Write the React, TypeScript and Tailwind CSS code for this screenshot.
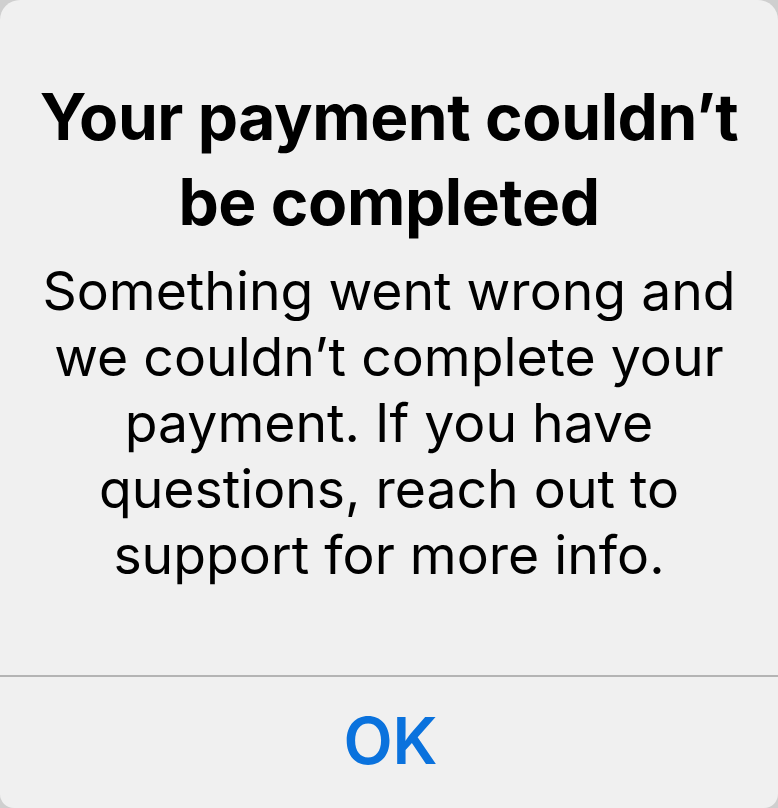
import React from 'react';

const App: React.FC = () => {
  return (
    <div className="w-[778px] h-[808px] bg-[#cfcfcf] overflow-hidden" style={{ fontFamily: 'Inter, "Noto Sans", sans-serif' }}>
      <div className="w-full h-full bg-[#f0f0f0] rounded-t-[20px] rounded-b-[14px] flex flex-col">
        <div className="flex flex-col items-center text-center text-black pt-[74px] px-6">
          <h1 className="text-[64px] leading-[85px] font-bold tracking-[-0.4px]">
            Your payment couldn’t
            <br />
            be completed
          </h1>
          <p className="mt-[14px] text-[53.5px] leading-[66px] font-normal">
            Something went wrong and
            <br />
            we couldn’t complete your
            <br />
            payment. If you have
            <br />
            questions, reach out to
            <br />
            support for more info.
          </p>
        </div>
        <div className="mt-auto h-[133px] border-t-2 border-[#b4b4b4] flex items-center justify-center">
          <button className="text-[64px] font-semibold text-[#0a72dd] leading-none pb-[4px] pl-[3px]">OK</button>
        </div>
      </div>
    </div>
  );
};

export default App;
